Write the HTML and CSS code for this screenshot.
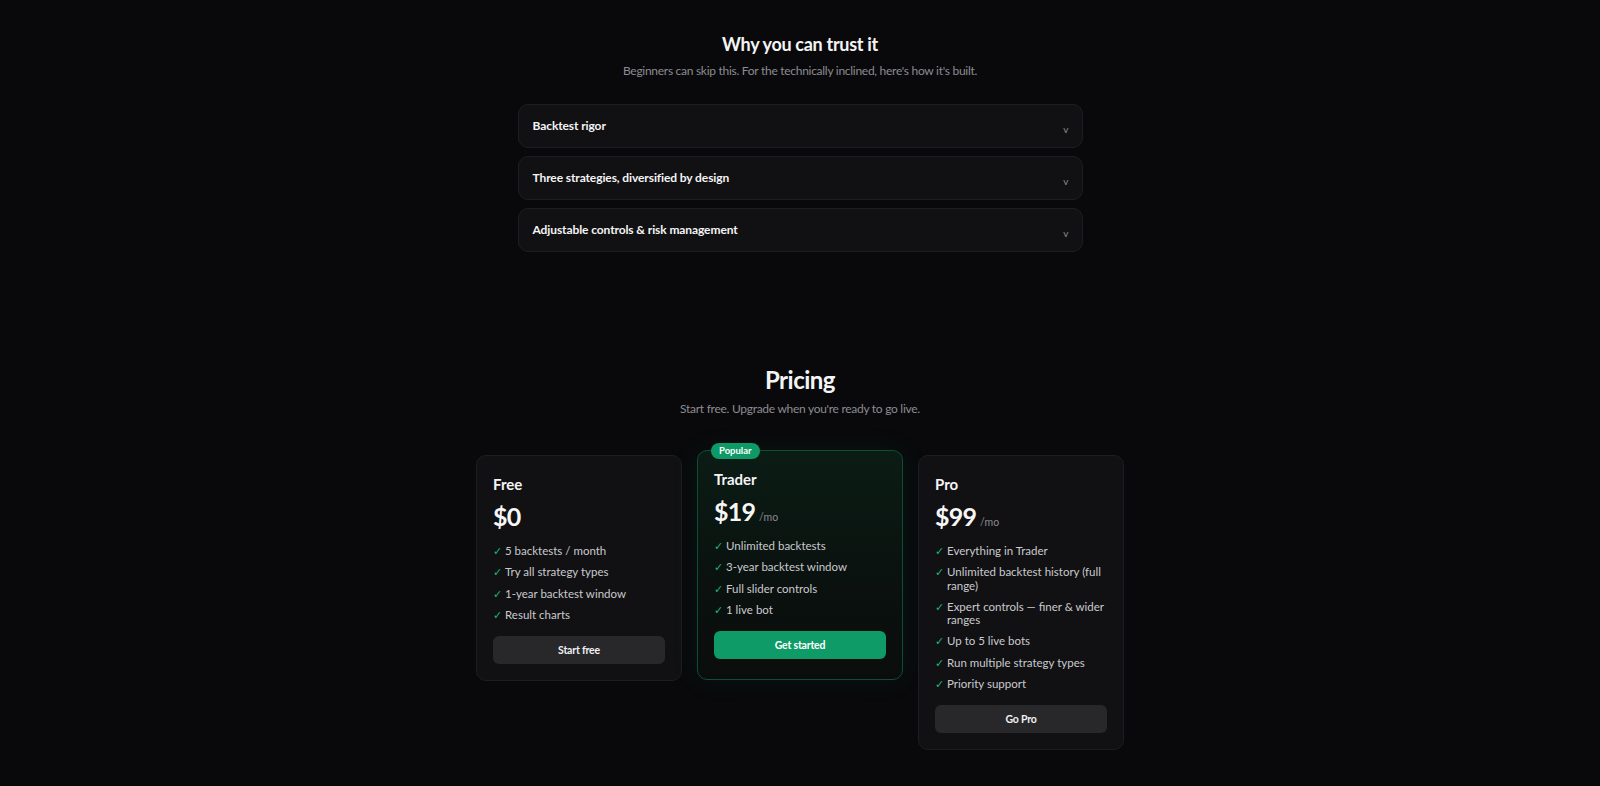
FILE: index.html
```html
<!DOCTYPE html>
<html lang="en">
<head>
    <meta charset="UTF-8">
    <meta name="viewport" content="width=device-width, initial-scale=1.0">
    <title>Trust &amp; Pricing</title>
    <link rel="stylesheet" href="styles.css">
</head>
<body>
    <section class="trust">
        <h2 class="section-title">Why you can trust it</h2>
        <p class="section-sub">Beginners can skip this. For the technically inclined, here's how it's built.</p>

        <div class="faq-list">
            <div class="faq-item">
                <span class="faq-q">Backtest rigor</span>
                <span class="faq-chev">v</span>
            </div>
            <div class="faq-item">
                <span class="faq-q">Three strategies, diversified by design</span>
                <span class="faq-chev">v</span>
            </div>
            <div class="faq-item">
                <span class="faq-q">Adjustable controls &amp; risk management</span>
                <span class="faq-chev">v</span>
            </div>
        </div>
    </section>

    <section class="pricing">
        <h2 class="section-title big">Pricing</h2>
        <p class="section-sub">Start free. Upgrade when you're ready to go live.</p>

        <div class="plans">
            <div class="plan">
                <h3 class="plan-name">Free</h3>
                <div class="plan-price">$0</div>
                <ul class="plan-features">
                    <li><span class="check">✓</span><span>5 backtests / month</span></li>
                    <li><span class="check">✓</span><span>Try all strategy types</span></li>
                    <li><span class="check">✓</span><span>1-year backtest window</span></li>
                    <li><span class="check">✓</span><span>Result charts</span></li>
                </ul>
                <button class="plan-btn">Start free</button>
            </div>

            <div class="plan featured">
                <span class="badge">Popular</span>
                <h3 class="plan-name">Trader</h3>
                <div class="plan-price">$19<span class="per">/mo</span></div>
                <ul class="plan-features">
                    <li><span class="check">✓</span><span>Unlimited backtests</span></li>
                    <li><span class="check">✓</span><span>3-year backtest window</span></li>
                    <li><span class="check">✓</span><span>Full slider controls</span></li>
                    <li><span class="check">✓</span><span>1 live bot</span></li>
                </ul>
                <button class="plan-btn primary">Get started</button>
            </div>

            <div class="plan">
                <h3 class="plan-name">Pro</h3>
                <div class="plan-price">$99<span class="per">/mo</span></div>
                <ul class="plan-features">
                    <li><span class="check">✓</span><span>Everything in Trader</span></li>
                    <li><span class="check">✓</span><span>Unlimited backtest history (full range)</span></li>
                    <li><span class="check">✓</span><span>Expert controls — finer &amp; wider ranges</span></li>
                    <li><span class="check">✓</span><span>Up to 5 live bots</span></li>
                    <li><span class="check">✓</span><span>Run multiple strategy types</span></li>
                    <li><span class="check">✓</span><span>Priority support</span></li>
                </ul>
                <button class="plan-btn">Go Pro</button>
            </div>
        </div>
    </section>
</body>
</html>
```

FILE: styles.css
```css
body {
    margin: 0;
    padding: 0;
    background-color: #09090b;
    color: #f2f2f3;
    font-family: Lato, "Noto Sans", sans-serif;
    min-height: 100vh;
}

.section-title {
    margin: 0;
    text-align: center;
    font-size: 18px;
    line-height: 24px;
    font-weight: 700;
    letter-spacing: -0.3px;
    color: #f4f4f5;
}

.section-title.big {
    font-size: 24px;
    line-height: 30px;
    letter-spacing: -0.5px;
}

.section-sub {
    margin: 6px 0 0;
    text-align: center;
    font-size: 12px;
    line-height: 18px;
    letter-spacing: -0.28px;
    color: #8c8c91;
}

/* Why you can trust it */
.trust {
    padding-top: 32px;
}

.faq-list {
    width: 565px;
    margin: 24px auto 0;
    display: flex;
    flex-direction: column;
    gap: 8px;
}

.faq-item {
    display: flex;
    justify-content: space-between;
    align-items: flex-start;
    height: 16px;
    padding: 13px 13px 13px 14px;
    background-color: #111113;
    border: 1px solid #1d1e21;
    border-radius: 10px;
    line-height: 16px;
}

.faq-q {
    font-size: 12px;
    font-weight: 700;
    letter-spacing: -0.1px;
    color: #f4f4f5;
}

.faq-chev {
    font-size: 10px;
    line-height: 10px;
    margin-top: 6px;
    color: #8c8c92;
}

/* Pricing */
.pricing {
    padding-top: 113px;
}

.pricing .section-sub {
    margin-top: 5px;
}

.plans {
    display: grid;
    grid-template-columns: repeat(3, 206px);
    gap: 15px;
    justify-content: center;
    align-items: start;
    margin-top: 37px;
}

.plan {
    position: relative;
    background-color: #111113;
    border: 1px solid #1d1e21;
    border-radius: 10px;
    padding: 17px 16px 16px;
}

.plan.featured {
    transform: translateY(-5px);
    padding-bottom: 20px;
    border-color: #0f4d35;
    background: linear-gradient(180deg, #0b1c15 0%, #0a110e 60%, #0a0d0c 100%);
    box-shadow: 0 0 28px rgba(16, 160, 105, 0.08);
}

.badge {
    position: absolute;
    top: -8px;
    left: 13px;
    padding: 0 8px;
    height: 16px;
    line-height: 16px;
    border-radius: 8px;
    background-color: #0e9a66;
    color: #ffffff;
    font-size: 9.5px;
    font-weight: 700;
}

.plan-name {
    margin: 0;
    font-size: 15px;
    line-height: 22px;
    font-weight: 700;
    color: #f4f4f5;
}

.plan-price {
    margin-top: 5px;
    font-size: 25px;
    line-height: 32px;
    font-weight: 700;
    letter-spacing: -0.8px;
    color: #f6f6f7;
}

.per {
    margin-left: 4px;
    font-size: 10.5px;
    line-height: 1;
    font-weight: 400;
    letter-spacing: 0;
    color: #8a8a90;
}

.plan-features {
    list-style: none;
    margin: 12px 0 0;
    padding: 0;
    display: flex;
    flex-direction: column;
    gap: 8px;
}

.plan-features li {
    display: flex;
    gap: 4px;
    font-size: 11.5px;
    line-height: 13.3px;
    color: #cacace;
}

.check {
    flex: none;
    width: 8px;
    color: #1cb872;
    font-size: 11px;
}

.plan-btn {
    display: block;
    width: 100%;
    height: 28px;
    margin-top: 15px;
    border: none;
    border-radius: 6px;
    background-color: #28282b;
    color: #f0f0f2;
    font-family: inherit;
    font-size: 10.5px;
    font-weight: 700;
    letter-spacing: -0.2px;
    cursor: pointer;
}

.plan-btn.primary {
    background-color: #0f9b68;
    color: #ffffff;
}
```
